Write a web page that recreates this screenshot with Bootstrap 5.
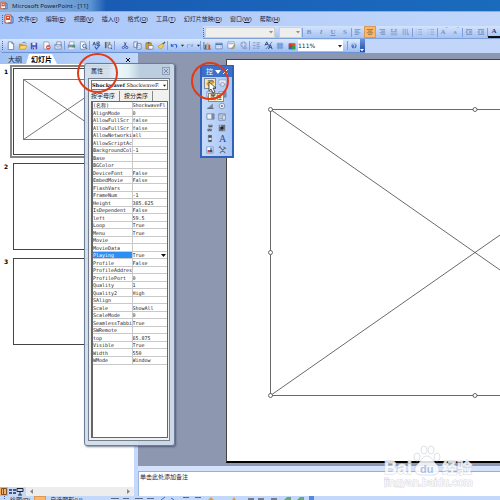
<!DOCTYPE html>
<html lang="zh-CN">
<head>
<meta charset="utf-8">
<meta name="viewport" content="width=device-width, initial-scale=1">
<title>Microsoft PowerPoint - [11]</title>
<link href="https://cdn.jsdelivr.net/npm/bootstrap@5.3.0/dist/css/bootstrap.min.css" rel="stylesheet">
<style>
:root{--ui:"Liberation Sans","Noto Sans CJK SC",sans-serif;--edge:#7f9fd8;}
body{font:6px/8px var(--ui);color:#17233f;background:#8e97b0;}
button,input,select{font:inherit;color:inherit;background:none;border:0;padding:0;margin:0;}
svg{display:block;flex:none;}
a{color:inherit;text-decoration:none;}
.titlebar{height:11px;background:linear-gradient(90deg,#8fb4dd 0,#7fa9da 50px,#5f95d2 90px,#1a5cb4 106px,#1b64bb 60%,#1a6bbb);font:6px/10px "Noto Sans",sans-serif;color:#10233f;}
.menus{height:15px;padding-left:2px;background:linear-gradient(90deg,#a5c5fb,#b3cdf9 40%,#c2d6fa);border-top:1px solid #88aee8;}
.formatrow{height:13px;background:linear-gradient(90deg,#a5c5fb,#b3cdf9 40%,#c2d6fa);}
.formatbar{background:linear-gradient(#d3e3fc,#a5c2f3);border-bottom:1px solid var(--edge);}
.stdrow{height:14px;background:#c2d6fa;}
.strip{padding-left:2px;background:linear-gradient(#dce9fe,#9cbdf2);border-bottom:1px solid #6d92d4;border-radius:3px 0 0 3px;}
.tool{width:12px;height:12px;display:flex;align-items:center;justify-content:center;flex:none;}
.tool.arrow{width:4px;}
.tool.on{background:#fbb765;border:1px solid #d9995a;}
.fmt{color:#7d90b8;font:bold 7px/12px "Liberation Serif",serif;}
.inkbar{color:#1f3f80;border-bottom:2px solid #111;line-height:10px;}
.rule{width:1px;height:9px;background:#7e9fd9;flex:none;}
.grip{width:2px;height:9px;border-left:1px dotted #4267ac;flex:none;}
.combo{height:11px;background:#eeeeec;border:1px solid #d2d0c8;}
.combo input,.combo select{appearance:none;min-width:0;outline:0;}
.fontbox{width:70px;}
.sizebox{width:23px;}
.drop{width:6px;height:9px;display:flex;align-items:center;justify-content:center;flex:none;}
.zoombox{width:45px;background:#fff;border:0;font:6px/9px "DejaVu Sans",sans-serif;}
.cap{width:5px;background:linear-gradient(#6a93df,#1d49a4);color:#fff;flex:none;}
.sidebar{width:138px;flex:none;background:#c4d9fb;}
.sidetabs{height:11px;background:linear-gradient(90deg,#9fc2f5,#c2d8fb);}
.sidetabs button{font-size:7px;line-height:9px;height:10px;}
.sidetabs .active-tab{background:#fff;font-weight:bold;clip-path:polygon(3px 0,26px 0,31px 100%,0 100%);width:31px;color:#000;}
.thumbs{background:#fff;margin-right:4px;}
.slideno{width:9px;font:bold 6px/8px "DejaVu Sans",sans-serif;color:#000;flex:none;}
.thumb{width:116px;height:87px;border:1px solid #444;background:#fff;}
.thumb.chosen{outline:2px solid #858585;outline-offset:1px;}
.views{height:9px;background:#c4d9fb;}
.hscroll{background:#ededee;color:#888;}
.fill-y{min-height:0;}
.fill-x{min-width:0;}
.desk{background:#8e97b0;overflow:hidden;padding:6px 0 3px 88px;}
.slide{background:#fff;border:1px solid #444;border-right:0;border-bottom:2px solid #000;padding:43px 0 0 38px;overflow:hidden;}
.splitter{height:6px;background:#d4e3fb;border-bottom:1px solid #8fafe4;}
.notes{height:24px;background:#fff;font-size:6px;padding:1px;border-left:1px solid #9ab5e2;}
.drawbar{height:4px;overflow:hidden;background:#c4d8fb;color:#222;}
.drawbar .tool{height:8px;}
.props{left:84px;top:63px;width:91px;height:383px;border:1px solid #6e7b95;border-radius:3px;padding:0 4px 4px 3px;background:rgba(209,221,235,.93);box-shadow:1px 1px 2px rgba(40,50,80,.6);}
.propstitle{height:14px;font-size:6px;padding-left:3px;background:linear-gradient(90deg,transparent 20px,#eaf6fa 30px,#e3f2f6 40px,#bccde0 52px);}
.closebox{width:8px;height:8px;border:1px solid #8e9fb7;color:#8797b3;}
.propsbody{background:#f1f1f0;border:1px solid #77808f;padding:1px 1px 2px 2px;}
.objsel{height:10px;border:1px solid #777;background:#fff;font:5px/8px "DejaVu Serif",serif;color:#111;}
.ptabs{margin-top:1px;}
.ptabs button{font-size:6px;line-height:9px;height:10px;color:#222;border-right:1px solid #888;}
.grid-box{background:#fff;border:1px solid #666;border-left-width:2px;overflow:hidden;}
.ptable{width:100%;height:263px;table-layout:fixed;border-collapse:collapse;font:5px/6px "DejaVu Sans Mono","Noto Sans CJK SC",monospace;color:#222;}
.ptable th,.ptable td{padding:0;border-bottom:1px solid #c9c9c9;font-weight:normal;white-space:nowrap;overflow:hidden;}
.ptable th{width:39px;border-right:1px solid #c9c9c9;}
.ptable tr.current th{background:#2b8ff3;color:#fff;}
.palette{left:200px;top:65px;width:34px;background:linear-gradient(90deg,#c6dafb,#a9c6f5);border:1px solid #2e62bb;border-width:1px 2px 2px;}
.palhead{height:11px;background:#3c70c8;color:#fff;font-size:7px;}
.palgrid{display:grid;grid-template-columns:repeat(2,12px);grid-auto-rows:11px;padding:1px 2px;}
.palgrid .tool{height:11px;}
.palgrid .tool.on{background:#fde2a0;border-color:#7d87a0;}
.tip{left:208px;top:93px;background:#fffbdc;border:1px solid #8a8a78;color:#333;font-size:6px;line-height:7px;padding:0 1px;}
.pointer{left:208px;top:82px;}
.ring{border:2px solid #e23a17;border-radius:50%;pointer-events:none;}
.ring-a{left:77px;top:53px;width:41px;height:40px;}
.ring-b{left:191px;top:62px;width:38px;height:38px;}
.brand{right:26px;bottom:12px;opacity:.85;pointer-events:none;font-family:"Liberation Sans","Noto Sans CJK SC",sans-serif;}
.brand text{fill:#fff;stroke:#cfd3dc;stroke-width:1px;paint-order:stroke;}
.brand .du{fill:#a9bce0;stroke:none;}
</style>
<script src="https://cdn.jsdelivr.net/npm/bootstrap@5.3.0/dist/js/bootstrap.bundle.min.js"></script>
</head>
<body class="vh-100 d-flex flex-column overflow-hidden position-relative m-0">
<svg width="0" height="0" class="position-absolute" aria-hidden="true">
<defs>
<symbol id="ppt" viewBox="0 0 10 10"><path d="M1 1h6v8H1z" fill="#fff" stroke="#bd4d2a"/><path d="M2 2h4v4H2z" fill="#d9522d"/><path d="M3 3h2v1H3z" fill="#fff"/><path d="M7 2l2 1v6H4" fill="none" stroke="#496cb4"/></symbol>
<symbol id="new" viewBox="0 0 10 10"><path d="M2.500 1h4l2 2v6.500h-6z" fill="#fff" stroke="#55709f" stroke-width=".8"/><path d="M6.500 1v2h2" fill="none" stroke="#55709f" stroke-width=".8"/></symbol>
<symbol id="open" viewBox="0 0 10 10"><path d="M1 8V3h3l1 1h3v4z" fill="#d99a2a"/><path d="M1 9l2-4h7L8 9z" fill="#ffda69" stroke="#a87518" stroke-width=".5"/><path d="M5 2q3-2 4 1" fill="none" stroke="#3c63af" stroke-width=".8"/></symbol>
<symbol id="save" viewBox="0 0 10 10"><path d="M1 1h8v8H1z" fill="#4755b8"/><path d="M3 1h4v3H3z" fill="#e9edff"/><path d="M3 6h4v3H3z" fill="#c2c8ef"/><path d="M4 7h1v2H4z" fill="#29347f"/></symbol>
<symbol id="perm" viewBox="0 0 10 10"><path d="M2 1h5l1 2v6H2z" fill="#f7faff" stroke="#7485a7" stroke-width=".7"/><circle cx="7" cy="7" r="2.500" fill="#dc4b3d"/><path d="M5.500 7h3" stroke="#fff"/></symbol>
<symbol id="mail" viewBox="0 0 10 10"><path d="M3 1h5v6H3z" fill="#edf2fc" stroke="#60789f" stroke-width=".7"/><path d="M1 4h7v5H1z" fill="#dce6f8" stroke="#5f7398" stroke-width=".7"/><path d="M1 4l3.500 3L8 4" fill="none" stroke="#5f7398" stroke-width=".7"/></symbol>
<symbol id="print" viewBox="0 0 10 10"><path d="M3 1h5l-1 4H2z" fill="#fff" stroke="#6c7d9c" stroke-width=".6"/><path d="M1 4h8v4H1z" fill="#7f91b4"/><path d="M2 7h6v2H2z" fill="#dce6f5"/><path d="M6 5h3v2H6z" fill="#3f9a4c"/></symbol>
<symbol id="preview" viewBox="0 0 10 10"><path d="M1.500 1h5l1 2v6h-6z" fill="#fff" stroke="#5f789e" stroke-width=".7"/><circle cx="6" cy="5.500" r="2" fill="#cfe3ff" stroke="#506e9f"/><path d="M7.500 7L9 9" stroke="#424c60"/></symbol>
<symbol id="spell" viewBox="0 0 10 10"><path d="M1 5L2.500 1 4 5M1.500 3.500h2M5.500 1v4h2V3h-2M6 1h2v2" fill="none" stroke="#32477c" stroke-width=".9"/><path d="M3 6l2 3 4-5" fill="none" stroke="#2f65c9" stroke-width="1.200"/></symbol>
<symbol id="research" viewBox="0 0 10 10"><path d="M1 1h2v7H1z" fill="#3b67b8"/><path d="M3 1h2v7H3z" fill="#edb83e"/><path d="M5 1h2v7H5z" fill="#8190b0"/><circle cx="6.500" cy="6" r="2" fill="#e4efff" stroke="#4f6796" stroke-width=".8"/><path d="M8 8l1 1" stroke="#333"/></symbol>
<symbol id="cut" viewBox="0 0 10 10"><path d="M6.500 1L4 6M4 1l3 6" stroke="#394d80" stroke-width="1"/><circle cx="3" cy="7.500" r="1.400" fill="none" stroke="#294daa"/><circle cx="7.200" cy="7.500" r="1.400" fill="none" stroke="#294daa"/></symbol>
<symbol id="copy" viewBox="0 0 10 10"><path d="M1 1h4v6H1zM4 3h5v6H4z" fill="#eff5ff" stroke="#5271ab" stroke-width=".8"/><path d="M5 5h3M5 7h3" stroke="#8199c9" stroke-width=".6"/></symbol>
<symbol id="paste" viewBox="0 0 10 10"><path d="M1 2h6v7H1z" fill="#d29d37" stroke="#8d641c" stroke-width=".6"/><path d="M3 1h2v2H3z" fill="#555f7a"/><path d="M4 5h5v4H4z" fill="#fff" stroke="#536995" stroke-width=".7"/></symbol>
<symbol id="brush" viewBox="0 0 10 10"><path d="M9 1L6 4" stroke="#4d5979" stroke-width="1.500"/><path d="M6 3l2 2-4 4-3-3z" fill="#f4cf52" stroke="#a27f2d" stroke-width=".6"/></symbol>
<symbol id="undo" viewBox="0 0 10 10"><path d="M1 2v4h4L3.500 4.500Q7 2 7.500 5T6 8.500Q10 7 9 4T3 3.500z" fill="#2b67cf"/></symbol>
<symbol id="redo" viewBox="0 0 10 10"><path d="M9 2v4H5l1.500-1.500Q3 2 2.500 5T4 8.500Q0 7 1 4T7 3.500z" fill="#91aad7"/></symbol>
<symbol id="down" viewBox="0 0 4 4"><path d="M0 1h4L2 3.500z" fill="currentColor"/></symbol>
<symbol id="chart" viewBox="0 0 10 10"><path d="M1 1v8h8" stroke="#5c6d91" fill="none"/><path d="M2 4h2v5H2z" fill="#2f65c4"/><path d="M4 2h2v7H4z" fill="#e6b535"/><path d="M6 4h2v5H6z" fill="#d54c3d"/></symbol>
<symbol id="table" viewBox="0 0 10 10"><path d="M1 1.500h8v7H1z" fill="#fff" stroke="#47689f" stroke-width=".8"/><path d="M1 2h8v2H1z" fill="#4772bd"/><path d="M1 6h8M4 3v5M7 3v5" stroke="#8da6d0" stroke-width=".6"/></symbol>
<symbol id="tabdraw" viewBox="0 0 10 10"><path d="M1 1h7v7H1z" fill="#f7fbff" stroke="#5d7eae" stroke-width=".7"/><path d="M9 4L5 9" stroke="#b99929" stroke-width="1.500"/><path d="M2 3h5" stroke="#779bd0"/></symbol>
<symbol id="linkglobe" viewBox="0 0 10 10"><circle cx="5" cy="4" r="3" fill="#a8bedf" stroke="#7f9acb"/><path d="M2 4h6M5 1v6" stroke="#dce8f9" stroke-width=".6"/><path d="M4 7h5v2H4z" fill="#91a5c9"/></symbol>
<symbol id="expand" viewBox="0 0 10 10"><path d="M1 2h3M1 5h3M1 8h3M5 2h4M5 4h3M5 6h4M5 8h3" stroke="#7e94bf"/></symbol>
<symbol id="aform" viewBox="0 0 10 10"><path d="M1 5l2-4 2 4M2 4h2M5 9l2-5 2 5M6 7h2" fill="none" stroke="#263e75"/><path d="M9 1L2 9" stroke="#3668bd" stroke-width=".8"/></symbol>
<symbol id="gridicon" viewBox="0 0 10 10"><path d="M1 1h8v8H1z" fill="#92b4e8"/><path d="M1 3h8M1 5h8M1 7h8M3 1v8M5 1v8M7 1v8" stroke="#648acb" stroke-width=".5"/></symbol>
<symbol id="rgb" viewBox="0 0 10 10"><path d="M1 2h8v7H1z" fill="#273755"/><path d="M1 2h4v4H1z" fill="#e13629"/><path d="M5 2h4v3H5z" fill="#d8502d"/><path d="M1 6h4v3H1z" fill="#3066ce"/><path d="M5 5h4v4H5z" fill="#2ca03c"/></symbol>
<symbol id="help" viewBox="0 0 10 10"><circle cx="5" cy="5" r="4" fill="#4477d1" stroke="#dce9ff"/><path d="M3.500 4q0-2 2-1.500t0 2.500v1M5.500 7v1" fill="none" stroke="#fff"/></symbol>
<symbol id="left" viewBox="0 0 10 10"><path d="M1 2h7M1 4h5M1 6h7M1 8h5" stroke="#7187b4"/></symbol>
<symbol id="center" viewBox="0 0 10 10"><path d="M1 2h8M2.500 4h5M1 6h8M2.500 8h5" stroke="#8b6c4b"/></symbol>
<symbol id="right" viewBox="0 0 10 10"><path d="M2 2h7M4 4h5M2 6h7M4 8h5" stroke="#7187b4"/></symbol>
<symbol id="dist" viewBox="0 0 10 10"><path d="M1 2h3M6 2h3M1 4.500h8M1 6.500h8M1 8.500h8M2 1v3M7 1v3" stroke="#8295bd" stroke-width=".9"/></symbol>
<symbol id="vert" viewBox="0 0 10 10"><path d="M1.500 1v8M4 1v8M6.500 1v5M6 9l1-3 1.500 3" stroke="#8295bd" fill="none"/></symbol>
<symbol id="list" viewBox="0 0 10 10"><path d="M1 2h1M1 5h1M1 8h1M4 2h5M4 5h5M4 8h5" stroke="#8da1c8"/></symbol>
<symbol id="indent" viewBox="0 0 10 10"><path d="M1 2h8M5 4h4M5 6h4M1 8h8M4 3L1 5l3 2" stroke="#7187b4" fill="none"/></symbol>
<symbol id="bars" viewBox="0 0 10 10"><path d="M1 2h8v6H1z" fill="#eef1f7" stroke="#677895" stroke-width=".8"/><path d="M6 2h3v6H6z" fill="#78899f"/></symbol>
<symbol id="listbox" viewBox="0 0 10 10"><path d="M1 1h8v8H1z" fill="#eff3fa" stroke="#52627e" stroke-width=".8"/><path d="M1 2.500h8M2 5h3M2 7h3M6 3v6" stroke="#687b9b"/></symbol>
<symbol id="tri" viewBox="0 0 10 10"><path d="M1 8L8 2v6z" fill="#7d8794"/><path d="M1 8h8" stroke="#4c5668"/></symbol>
<symbol id="radio" viewBox="0 0 10 10"><circle cx="5" cy="5" r="3.500" fill="#edf1f6" stroke="#78869a"/><circle cx="5" cy="5" r="1.300" fill="#65748c"/></symbol>
<symbol id="spin" viewBox="0 0 10 10"><path d="M3 1h5v3H3zM2 6h5v3H2z" fill="#4c535f"/><path d="M4 3l1.500-2L7 3M3 7l1.500 1L6 7" fill="none" stroke="#e5ebf2" stroke-width=".7"/></symbol>
<symbol id="picbox" viewBox="0 0 10 10"><path d="M1 1h8v8H1z" fill="#69717b"/><circle cx="5" cy="5" r="2" fill="#20242b"/><path d="M2 2h2v1H2zM7 7h1v1H7z" fill="#e8edf5"/></symbol>
<symbol id="vscroll" viewBox="0 0 10 10"><path d="M3 1h4v8H3z" fill="#dde3eb" stroke="#677180" stroke-width=".6"/><path d="M3 1h4v3H3zM3 7h4v2H3z" fill="#464f5c"/></symbol>
<symbol id="image" viewBox="0 0 10 10"><path d="M1 1h8v8H1z" fill="#f4f7ff" stroke="#5770a1" stroke-width=".7"/><path d="M2 5h3v3H2z" fill="#c84339"/><path d="M5 2h3v3H5z" fill="#7299dc"/><path d="M5 5h3v3H5z" fill="#354f86"/></symbol>
<symbol id="wrench" viewBox="0 0 10 10"><path d="M2 2l6 7M8 3L2 9M1 3l2-2M6 2l3 2" stroke="#6c7380" stroke-width="1.200"/></symbol>
<symbol id="hand" viewBox="0 0 10 10"><path d="M1 5l3-3h4l1 2-3 1-3 3z" fill="#e9b937" stroke="#846325" stroke-width=".6"/><path d="M2 2h6" stroke="#5b687c"/></symbol>
<symbol id="magn" viewBox="0 0 10 10"><path d="M1 1h8v5H1z" fill="#e8eef7" stroke="#8390a6" stroke-width=".6"/><circle cx="5" cy="6" r="2.200" fill="#d8e7fa" stroke="#7b8ba8" stroke-width=".8"/></symbol>
</defs>
</svg>

<header class="flex-shrink-0">
  <div class="titlebar d-flex align-items-center overflow-hidden">
    <svg width="8" height="9" class="me-1"><use href="#ppt"/></svg><span>Microsoft PowerPoint - [11]</span>
  </div>
  <nav class="menus d-flex align-items-center overflow-hidden text-nowrap" aria-label="菜单">
    <span class="grip"></span><svg width="10" height="10" class="me-1"><use href="#ppt"/></svg>
    <div class="d-flex gap-2">
      <a href="#">文件(<u>F</u>)</a><a href="#">编辑(<u>E</u>)</a><a href="#">视图(<u>V</u>)</a><a href="#">插入(<u>I</u>)</a><a href="#">格式(<u>O</u>)</a><a href="#">工具(<u>T</u>)</a><a href="#">幻灯片放映(<u>D</u>)</a><a href="#">窗口(<u>W</u>)</a><a href="#">帮助(<u>H</u>)</a>
    </div>
  </nav>
  <div class="formatrow d-flex justify-content-end overflow-hidden">
    <div class="formatbar d-flex align-items-center flex-shrink-0">
      <span class="grip"></span>
      <label class="combo fontbox d-flex align-items-center"><input class="flex-grow-1" aria-label="字体"><span class="drop"><svg width="4" height="4" color="#998f76"><use href="#down"/></svg></span></label>
      <label class="combo sizebox d-flex align-items-center ms-1"><input class="w-50 flex-grow-1" aria-label="字号"><span class="drop"><svg width="4" height="4" color="#998f76"><use href="#down"/></svg></span></label>
      <span class="rule"></span>
      <button class="tool fmt">B</button><button class="tool fmt fst-italic">I</button><button class="tool fmt"><u>U</u></button><button class="tool fmt">S</button>
      <span class="rule"></span>
      <button class="tool" aria-label="左对齐"><svg width="8" height="8"><use href="#left"/></svg></button><button class="tool on" aria-label="居中"><svg width="8" height="8"><use href="#center"/></svg></button><button class="tool" aria-label="右对齐"><svg width="8" height="8"><use href="#right"/></svg></button><button class="tool" aria-label="分散对齐"><svg width="8" height="8"><use href="#dist"/></svg></button><button class="tool" aria-label="文字方向"><svg width="8" height="8"><use href="#vert"/></svg></button>
      <span class="rule"></span>
      <button class="tool" aria-label="编号"><svg width="8" height="8"><use href="#list"/></svg></button><button class="tool" aria-label="项目符号"><svg width="8" height="8"><use href="#list"/></svg></button>
      <span class="rule"></span>
      <button class="tool fmt">A<sup>ˆ</sup></button><button class="tool fmt">ᴀ<sup>ˇ</sup></button>
      <span class="rule"></span>
      <button class="tool" aria-label="减少缩进"><svg width="8" height="8"><use href="#indent"/></svg></button><button class="tool" aria-label="增加缩进"><svg width="8" height="8"><use href="#indent"/></svg></button>
      <span class="rule"></span>
      <button class="tool fmt inkbar">A</button>
    </div>
  </div>
  <div class="stdrow d-flex">
    <div class="strip d-flex align-items-center flex-shrink-0">
      <span class="grip"></span>
      <button class="tool" aria-label="新建"><svg width="9" height="9"><use href="#new"/></svg></button><button class="tool" aria-label="打开"><svg width="9" height="9"><use href="#open"/></svg></button><button class="tool" aria-label="保存"><svg width="8" height="8"><use href="#save"/></svg></button><button class="tool" aria-label="权限"><svg width="9" height="9"><use href="#perm"/></svg></button><button class="tool" aria-label="邮件"><svg width="9" height="9"><use href="#mail"/></svg></button>
      <span class="rule"></span>
      <button class="tool" aria-label="打印"><svg width="9" height="9"><use href="#print"/></svg></button><button class="tool" aria-label="打印预览"><svg width="9" height="9"><use href="#preview"/></svg></button>
      <span class="rule"></span>
      <button class="tool" aria-label="拼写检查"><svg width="9" height="9"><use href="#spell"/></svg></button><button class="tool" aria-label="信息检索"><svg width="9" height="9"><use href="#research"/></svg></button>
      <span class="rule me-1"></span>
      <button class="tool" aria-label="剪切"><svg width="8" height="9"><use href="#cut"/></svg></button><button class="tool" aria-label="复制"><svg width="9" height="9"><use href="#copy"/></svg></button><button class="tool" aria-label="粘贴"><svg width="9" height="9"><use href="#paste"/></svg></button><button class="tool" aria-label="格式刷"><svg width="9" height="9"><use href="#brush"/></svg></button>
      <span class="rule"></span>
      <button class="tool" aria-label="撤消"><svg width="8" height="8"><use href="#undo"/></svg></button><button class="tool arrow" aria-label="撤消列表"><svg width="3" height="3"><use href="#down"/></svg></button><button class="tool" aria-label="恢复"><svg width="8" height="8"><use href="#redo"/></svg></button><button class="tool arrow" aria-label="恢复列表"><svg width="3" height="3"><use href="#down"/></svg></button>
      <span class="rule"></span>
      <button class="tool" aria-label="图表"><svg width="9" height="9"><use href="#chart"/></svg></button><button class="tool" aria-label="表格"><svg width="8" height="8"><use href="#table"/></svg></button><button class="tool" aria-label="表格和边框"><svg width="9" height="9"><use href="#tabdraw"/></svg></button><button class="tool" aria-label="超链接"><svg width="9" height="9"><use href="#linkglobe"/></svg></button>
      <span class="rule"></span>
      <button class="tool" aria-label="全部展开"><svg width="9" height="9"><use href="#expand"/></svg></button><button class="tool" aria-label="显示格式"><svg width="9" height="9"><use href="#aform"/></svg></button><button class="tool" aria-label="网格"><svg width="8" height="8"><use href="#gridicon"/></svg></button><button class="tool" aria-label="颜色"><svg width="8" height="8"><use href="#rgb"/></svg></button>
      <label class="combo zoombox d-flex align-items-center"><input class="flex-grow-1 w-50" value="111%" aria-label="显示比例"><span class="drop"><svg width="4" height="4"><use href="#down"/></svg></span></label>
      <span class="rule ms-1"></span>
      <button class="tool" aria-label="帮助"><svg width="8" height="8"><use href="#help"/></svg></button>
      <span class="cap align-self-stretch d-flex align-items-end"><svg width="4" height="4"><use href="#down"/></svg></span>
    </div>
  </div>
</header>

<main class="d-flex flex-grow-1 fill-y">
  <aside class="sidebar d-flex flex-column">
    <div class="sidetabs d-flex align-items-end flex-shrink-0 ps-2">
      <button class="me-1">大纲</button><button class="active-tab">幻灯片</button>
      <button class="ms-auto me-2" aria-label="关闭窗格"><svg width="4" height="9" viewBox="0 0 4 9"><path d="M0 3l4 4M4 3L0 7" stroke="#111"/></svg></button>
    </div>
    <div class="thumbs flex-grow-1 overflow-hidden d-flex flex-column gap-2 pt-1 ps-1">
      <div class="d-flex"><span class="slideno">1</span><div class="thumb chosen"><svg width="114" height="85" fill="none" stroke="#555" stroke-width=".8"><path d="M9.500 10.500h88v60h-88zl88 60M97.500 10.500l-88 60"/></svg></div></div>
      <div class="d-flex"><span class="slideno">2</span><div class="thumb"></div></div>
      <div class="d-flex"><span class="slideno">3</span><div class="thumb"></div></div>
    </div>
    <div class="views d-flex flex-shrink-0">
      <svg width="26" height="9"><path d="M0 0h8v9H0z" fill="#f2b168"/><path d="M1.500 1.500h5v6h-5zM3.500 1v6" fill="none" stroke="#80502e"/><path d="M9 2h3v2H9zM13 2h3v2h-3zM9 5h3v2H9zM13 5h3v2h-3z" fill="#4a5875"/><path d="M17 1.500h6v3h-6zM20 4v4M18 8h4" fill="none" stroke="#222"/></svg>
      <div class="hscroll flex-grow-1 d-flex justify-content-between align-items-center me-1 px-1"><svg width="3" height="5"><path d="M3 0v5L0 2.500z" fill="#888"/></svg><svg width="3" height="5"><path d="M0 0v5l3-2.500z" fill="#888"/></svg></div>
    </div>
  </aside>
  <section class="d-flex flex-column flex-grow-1 fill-x">
    <div class="desk flex-grow-1 d-flex">
      <div class="slide flex-grow-1">
        <svg width="420" height="300" fill="none" stroke="#444" stroke-width=".8"><path d="M5.500 6.500h409v286H5.500zl409 286M414.500 6.500l-409 286"/><g fill="#fff"><circle cx="5.500" cy="6.500" r="2"/><circle cx="210" cy="6.500" r="2"/><circle cx="5.500" cy="149.500" r="2"/><circle cx="5.500" cy="292.500" r="2"/><circle cx="210" cy="292.500" r="2"/></g></svg>
      </div>
    </div>
    <div class="splitter flex-shrink-0"></div>
    <div class="notes flex-shrink-0">单击此处添加备注</div>
  </section>
</main>

<footer class="drawbar flex-shrink-0 d-flex align-items-start ps-1 text-nowrap">
  <span class="grip me-1"></span><span class="me-1">绘图(R)</span><button class="tool on" aria-label="选择对象"></button><span class="mx-1">自选图形(U)</span>
  <svg width="130" height="4" class="ms-4"><path d="M0 2.500h8M12 2.500h6M24 2.500h8M36 2.500h7" stroke="#5d6b87"/><path d="M50 4l4-3M60 2l3 2M72 1.500h6M84 1.500h6" stroke="#3b69c8"/><path d="M97 4l3-3 3 3zM121 4l2-3 2 3z" fill="#d8a338"/></svg>
  <svg width="75" height="4" class="ms-1"><path d="M3 3h6M13 3h6M26 3h6" stroke="#222"/><path d="M39 4l3-3h4v3zM52 4l3-3h4v3z" fill="#68a873"/><path d="M64 0h5v4h-5z" fill="#5a87de"/></svg>
</footer>

<section class="props position-absolute d-flex flex-column" aria-label="属性">
  <div class="propstitle d-flex align-items-center justify-content-between flex-shrink-0"><span>属性</span><button class="closebox d-flex align-items-center justify-content-center" aria-label="关闭"><svg width="4" height="4"><path d="M0 0l4 4M4 0L0 4" stroke="#7b8cab"/></svg></button></div>
  <div class="propsbody flex-grow-1 d-flex flex-column fill-y">
    <button class="objsel flex-shrink-0 d-flex align-items-center justify-content-between overflow-hidden text-nowrap" aria-label="对象"><span class="overflow-hidden"><b>Shockwavef</b> ShockwaveF.</span><span class="drop"><svg width="3" height="3"><use href="#down"/></svg></span></button>
    <div class="ptabs d-flex flex-shrink-0 gap-1"><button class="pe-1">按字母序</button><button class="pe-1">按分类序</button></div>
    <div class="grid-box flex-grow-1">
      <table class="ptable">
        <tbody>
        <tr><th scope="row">(名称)</th><td>ShockwaveFl</td></tr>
        <tr><th scope="row">AlignMode</th><td>0</td></tr>
        <tr><th scope="row">AllowFullScr</th><td>false</td></tr>
        <tr><th scope="row">AllowFullScr</th><td>false</td></tr>
        <tr><th scope="row">AllowNetworki</th><td>all</td></tr>
        <tr><th scope="row">AllowScriptAc</th><td></td></tr>
        <tr><th scope="row">BackgroundCol</th><td>-1</td></tr>
        <tr><th scope="row">Base</th><td></td></tr>
        <tr><th scope="row">BGColor</th><td></td></tr>
        <tr><th scope="row">DeviceFont</th><td>False</td></tr>
        <tr><th scope="row">EmbedMovie</th><td>False</td></tr>
        <tr><th scope="row">FlashVars</th><td></td></tr>
        <tr><th scope="row">FrameNum</th><td>-1</td></tr>
        <tr><th scope="row">Height</th><td>385.625</td></tr>
        <tr><th scope="row">IsDependent</th><td>False</td></tr>
        <tr><th scope="row">left</th><td>59.5</td></tr>
        <tr><th scope="row">Loop</th><td>True</td></tr>
        <tr><th scope="row">Menu</th><td>True</td></tr>
        <tr><th scope="row">Movie</th><td></td></tr>
        <tr><th scope="row">MovieData</th><td></td></tr>
        <tr class="current"><th scope="row">Playing</th><td><div class="d-flex justify-content-between align-items-center"><span>True</span><svg width="7" height="5" viewBox="0 0 7 5"><path d="M1 1h5L3.500 4z" fill="#111"/></svg></div></td></tr>
        <tr><th scope="row">Profile</th><td>False</td></tr>
        <tr><th scope="row">ProfileAddres</th><td></td></tr>
        <tr><th scope="row">ProfilePort</th><td>0</td></tr>
        <tr><th scope="row">Quality</th><td>1</td></tr>
        <tr><th scope="row">Quality2</th><td>High</td></tr>
        <tr><th scope="row">SAlign</th><td></td></tr>
        <tr><th scope="row">Scale</th><td>ShowAll</td></tr>
        <tr><th scope="row">ScaleMode</th><td>0</td></tr>
        <tr><th scope="row">SeamlessTabbi</th><td>True</td></tr>
        <tr><th scope="row">SWRemote</th><td></td></tr>
        <tr><th scope="row">top</th><td>65.875</td></tr>
        <tr><th scope="row">Visible</th><td>True</td></tr>
        <tr><th scope="row">Width</th><td>550</td></tr>
        <tr><th scope="row">WMode</th><td>Window</td></tr>
        </tbody>
      </table>
    </div>
  </div>
</section>

<section class="palette position-absolute" aria-label="控件工具箱">
  <div class="palhead d-flex align-items-center justify-content-between px-1"><span>控</span><svg width="6" height="4" viewBox="0 0 6 4"><path d="M0 0h6L3 4z" fill="#fff"/></svg><svg width="5" height="5"><path d="M0 0l5 5M5 0L0 5" stroke="#fff"/></svg></div>
  <div class="palgrid">
    <button class="tool on" aria-label="属性"><svg width="9" height="9"><use href="#hand"/></svg></button><button class="tool" aria-label="查看代码"><svg width="9" height="9"><use href="#magn"/></svg></button>
    <button class="tool" aria-label="复选框"><svg width="9" height="9"><use href="#bars"/></svg></button><button class="tool" aria-label="文本框"><svg width="9" height="9"><use href="#bars"/></svg></button>
    <button class="tool" aria-label="命令按钮"><svg width="9" height="8"><use href="#tri"/></svg></button><button class="tool" aria-label="选项按钮"><svg width="8" height="8"><use href="#radio"/></svg></button>
    <button class="tool" aria-label="组合框"><svg width="9" height="9"><use href="#bars"/></svg></button><button class="tool" aria-label="列表框"><svg width="8" height="8"><use href="#listbox"/></svg></button>
    <button class="tool" aria-label="切换按钮"><svg width="8" height="8"><use href="#spin"/></svg></button><button class="tool" aria-label="数值调节钮"><svg width="8" height="8"><use href="#picbox"/></svg></button>
    <button class="tool" aria-label="滚动条"><svg width="8" height="9"><use href="#vscroll"/></svg></button><button class="tool" aria-label="标签"><svg width="9" height="9"><text x="1" y="8" font-size="10" font-family="Liberation Serif" fill="#1c4d9c">A</text></svg></button>
    <button class="tool" aria-label="图像"><svg width="8" height="8"><use href="#image"/></svg></button><button class="tool" aria-label="其他控件"><svg width="9" height="9"><use href="#wrench"/></svg></button>
  </div>
</section>
<div class="tip position-absolute">属性</div>
<svg class="pointer position-absolute" width="9" height="12" viewBox="0 0 9 12"><path d="M1 0v9l2-2 2 4 2-1-2-4h3z" fill="#fff" stroke="#333" stroke-width=".8"/></svg>
<div class="ring ring-a position-absolute"></div>
<div class="ring ring-b position-absolute"></div>

<svg class="brand position-absolute" width="90" height="44" viewBox="0 0 90 44" aria-label="Baidu 经验">
  <text x="0" y="30" font-size="18" font-weight="bold">Bai</text>
  <g fill="#fff" stroke="#cfd3dc" stroke-width=".8"><ellipse cx="33" cy="13" rx="3" ry="4"/><ellipse cx="40" cy="6" rx="3" ry="4"/><ellipse cx="47" cy="6" rx="3" ry="4"/><ellipse cx="53" cy="13" rx="3" ry="4"/><path d="M43 12c-5 0-6 6-10 9-4 4-2 10 4 10h12c6 0 8-6 4-10-4-3-5-9-10-9z"/></g>
  <text class="du" x="36" y="29" font-size="11" font-weight="bold">du</text>
  <text x="58" y="29" font-size="15" font-weight="bold">经验</text>
  <text x="0" y="42" font-size="11">jingyan.baidu.com</text>
</svg>
</body>
</html>
